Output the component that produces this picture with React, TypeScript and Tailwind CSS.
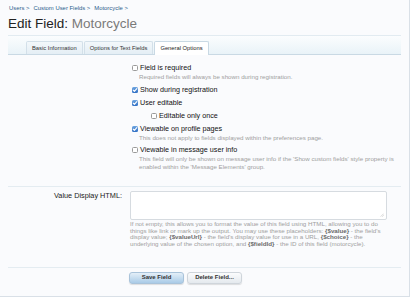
import React from 'react';

type Opt = {
  label: string;
  checked: boolean;
  hint?: string[];
  indent?: boolean;
};

const options: Opt[] = [
  {
    label: 'Field is required',
    checked: false,
    hint: ['Required fields will always be shown during registration.'],
  },
  { label: 'Show during registration', checked: true },
  { label: 'User editable', checked: true },
  { label: 'Editable only once', checked: false, indent: true },
  {
    label: 'Viewable on profile pages',
    checked: true,
    hint: ['This does not apply to fields displayed within the preferences page.'],
  },
  {
    label: 'Viewable in message user info',
    checked: false,
    hint: [
      "This field will only be shown on message user info if the 'Show custom fields' style property is",
      "enabled within the 'Message Elements' group.",
    ],
  },
];

const Checkbox: React.FC<{ checked: boolean }> = ({ checked }) =>
  checked ? (
    <span className="flex h-[6px] w-[6px] shrink-0 items-center justify-center rounded-[1.5px] bg-gradient-to-b from-[#6fa6e0] to-[#2f6fc4]">
      <svg viewBox="0 0 10 10" className="h-[6px] w-[6px]" fill="none">
        <path d="M2 5.2l2 2.2L8 2.6" stroke="#fff" strokeWidth={1.8} strokeLinecap="round" strokeLinejoin="round" />
      </svg>
    </span>
  ) : (
    <span className="h-[6px] w-[6px] shrink-0 rounded-[1.5px] border border-[#9a9a9a] bg-white" />
  );

const tabs = ['Basic Information', 'Options for Text Fields', 'General Options'];

const Ph: React.FC<{ children: React.ReactNode }> = ({ children }) => (
  <b className="text-[#6a6a6a]">{children}</b>
);

export default function App() {
  return (
    <div className="h-[300px] w-[413px] bg-white font-['Liberation_Sans',Arial,sans-serif]">
      <div className="h-[297px] w-[410px] border-r border-b border-[#d9e0e7] bg-[#fafbfd]">
        {/* breadcrumb */}
        <div className="flex gap-[4px] pl-[9px] pt-[5px] text-[5.9px] leading-[7px] text-[#2b5d8c]">
          <span>Users &gt;</span>
          <span>Custom User Fields &gt;</span>
          <span>Motorcycle &gt;</span>
        </div>
        <h1 className="mt-[4px] pl-[8px] text-[13.5px] leading-[16px] text-[#222]">
          Edit Field: <span className="text-[#7a7a7a]">Motorcycle</span>
        </h1>

        {/* tabs */}
        <div className="mx-[8px] mt-[3px] flex h-[20px] items-end border-t border-b border-[#e2ebf1] border-b-[#c9d9e4] bg-gradient-to-b from-[#fbfdfe] to-[#e9f3f8] pl-[18px]">
          {tabs.map((t, i) => {
            const active = i === 2;
            return (
              <div
                key={t}
                className={
                  active
                    ? 'mb-[-1px] flex h-[14px] items-center rounded-t-[2px] border border-b-0 border-[#c9d9e4] bg-white px-[5px] text-[5.8px] text-[#222]'
                    : 'mr-[1px] flex h-[13px] items-center rounded-t-[2px] border border-b-0 border-[#d3e0e9] bg-gradient-to-b from-[#f3f8fb] to-[#e4eef5] px-[5px] text-[5.8px] text-[#333]'
                }
              >
                {t}
              </div>
            );
          })}
        </div>

        {/* checkbox options */}
        <div className="flex flex-col pl-[132px] pt-[9px]">
          {options.map((o) => (
            <div key={o.label} className={o.indent ? 'pl-[19px]' : ''}>
              <label className="flex h-[8px] items-center gap-[1px] text-[7.2px] leading-[8px] text-[#111]">
                <Checkbox checked={o.checked} />
                <span className="ml-[1px]">{o.label}</span>
              </label>
              {o.hint && (
                <div className="pl-[7px] pt-[1px] text-[6.2px] leading-[7.5px] whitespace-nowrap text-[#a0a0a0]">
                  {o.hint.map((h) => (
                    <div key={h}>{h}</div>
                  ))}
                </div>
              )}
              <div className="h-[5px]" />
            </div>
          ))}
        </div>

        <div className="mx-[8px] mt-[11px] border-t border-[#e4ecf1]" />

        {/* value display html */}
        <div className="mt-[4px] flex gap-[8px]">
          <div className="w-[122px] pt-[1px] text-right text-[7.3px] leading-[8px] text-[#222]">
            Value Display HTML:
          </div>
          <div className="w-[257px]">
            <div className="relative h-[29px] rounded-[2px] border border-[#d6dbe0] bg-white">
              <svg viewBox="0 0 6 6" className="absolute bottom-[2px] right-[2px] h-[4px] w-[4px]">
                <path d="M5.5 1L1 5.5M5.5 3.5L3.5 5.5" stroke="#aaa" strokeWidth={0.7} />
              </svg>
            </div>
            <div className="mt-[1px] text-[6.2px] leading-[6.7px] whitespace-nowrap text-[#a0a0a0]">
              <div>If not empty, this allows you to format the value of this field using HTML, allowing you to do</div>
              <div>
                things like link or mark up the output. You may use these placeholders: <Ph>{'{$value}'}</Ph> - the field's
              </div>
              <div>
                display value; <Ph>{'{$valueUrl}'}</Ph> - the field's display value for use in a URL, <Ph>{'{$choice}'}</Ph> - the
              </div>
              <div>
                underlying value of the chosen option, and <Ph>{'{$fieldId}'}</Ph> - the ID of this field (motorcycle).
              </div>
            </div>
          </div>
        </div>

        <div className="mx-[8px] mt-[19px] border-t border-[#e4ecf1]" />

        {/* buttons */}
        <div className="mt-[4px] flex gap-[3px] pl-[129px]">
          <button className="h-[12px] w-[55px] rounded-[3px] border border-[#a9c3da] bg-gradient-to-b from-[#e4eff8] to-[#a9cbe7] text-[6px] font-bold text-[#333] shadow-[0_1px_1px_rgba(0,0,0,0.12)]">
            Save Field
          </button>
          <button className="h-[12px] w-[55px] rounded-[3px] border border-[#cfd5db] bg-gradient-to-b from-[#fbfcfd] to-[#e4e9ee] text-[6px] font-bold text-[#333] shadow-[0_1px_1px_rgba(0,0,0,0.12)]">
            Delete Field...
          </button>
        </div>
      </div>
    </div>
  );
}
